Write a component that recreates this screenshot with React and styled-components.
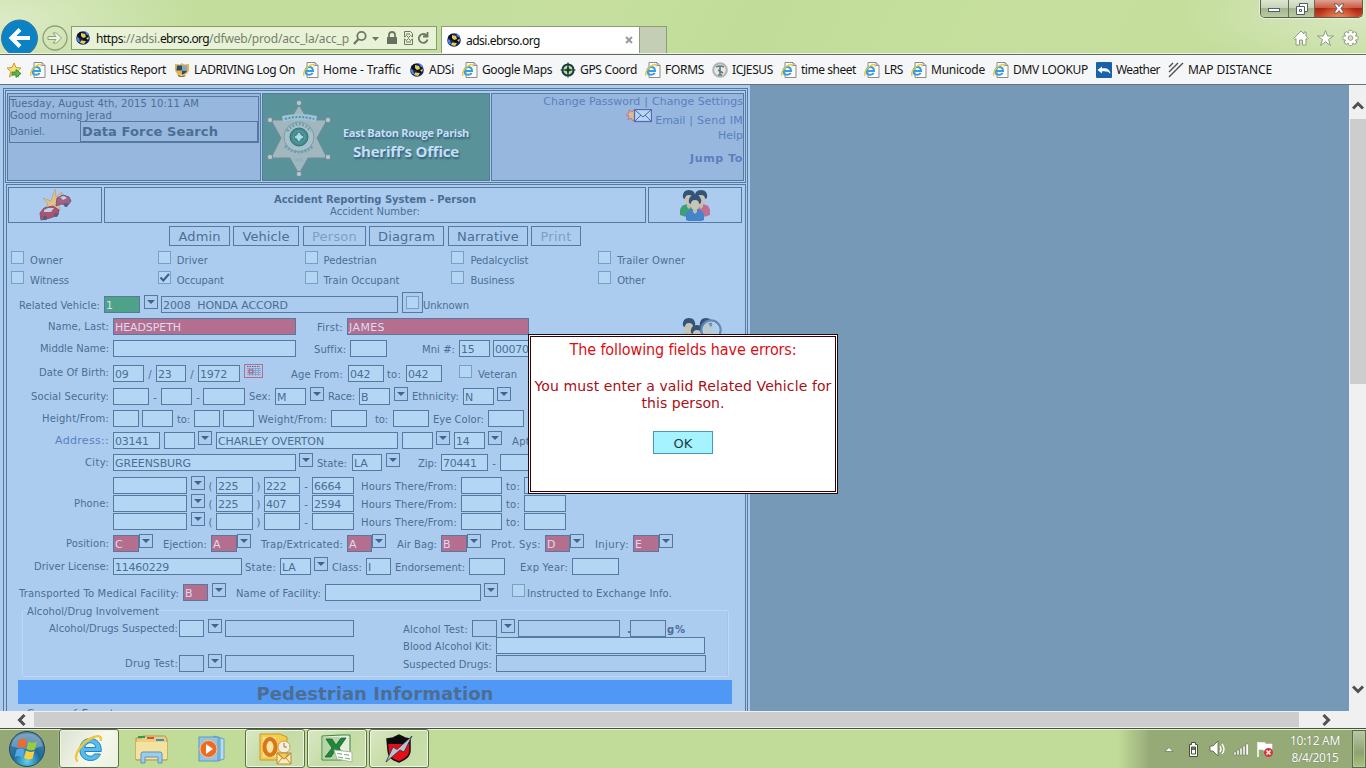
import React, { useLayoutEffect, useRef, useState } from "react";
import styled, { createGlobalStyle, css } from "styled-components";

const verdana = `"DejaVu Sans", Verdana, sans-serif`;
const segoe = `"Noto Sans", "Open Sans", "Segoe UI", sans-serif`;
const c = {
  page: "#abccef", line: "#55799f", text: "#4c6e93", field: "#b3d6f5",
  link: "#5b80bd", cell: "#97b7df", dim: "#7d9fc4",
};

const Global = createGlobalStyle`
  * { box-sizing: border-box; }
  html, body { margin: 0; height: 768px; overflow: hidden; }
  body { font: 10px/12px ${verdana}; color: ${c.text}; }
  svg { display: block; flex: none; }
`;

/* Text that spreads its letters to fill a known width */
const Run = styled.span`
  display: inline-block;
  white-space: pre;
  flex: none;
`;
function Fit({ w, children, className }) {
  const ref = useRef(null);
  const [gap, setGap] = useState(0);
  useLayoutEffect(() => {
    const natural = ref.current.getBoundingClientRect().width;
    setGap((w - natural) / ref.current.textContent.length);
  }, [w]);
  return <Run ref={ref} className={className} style={{ letterSpacing: gap }}>{children}</Run>;
}

/* ---------- browser chrome ---------- */
const Screen = styled.div`
  width: 1366px; height: 768px; position: relative; overflow: hidden;
  display: flex; flex-direction: column; background: #7799b8;
`;
const TitleBar = styled.header`
  height: 55px; flex: none; display: flex; align-items: flex-start;
  border-bottom: 1px solid #656b60; box-shadow: inset 0 -1px #eef3e4;
  background:
    radial-gradient(ellipse 200px 70px at 0 20px, #dcebc6, transparent),
    radial-gradient(ellipse 190px 60px at 1366px 15px, #d9e8c2, transparent),
    linear-gradient(115deg, #c2dd9c 30%, #c6df9f 42%, #c1dc98 55%, #c6df9e 75%, #c2dc99);
  font: 12px/16px ${segoe}; color: #111;
`;
const BackSlot = styled.div`width: 40px; height: 53px; padding: 19px 0 0 1px; overflow: hidden;`;
const ForwardSlot = styled.div`width: 31px; padding: 25px 0 0 2px;`;
const AddressBar = styled.div`
  width: 366px; height: 24px; margin-top: 26px; padding: 0 5px 0 3px; display: flex; align-items: center;
  background: #e7f2d6; border: 1px solid #8a9b72;
`;
const Url = styled.div`display: flex; margin-left: 5px; color: #77806c; width: 259px; padding-top: 1px; b { font-weight: 400; color: #111; }`;
const Tab = styled.div`
  margin: 26px 0 0 4px; width: 199px; height: 27px; padding: 0 6px 0 4px; display: flex; align-items: center;
  background: #fff; border: 1px solid #8d9c7a; border-bottom: 0;
`;
const TabTitle = styled.div`flex: 1; padding: 2px 0 0 4px;`;
const NewTab = styled.div`width: 27px; height: 27px; margin-top: 26px; background: #c4ceb5; border: 1px solid #8d9c7a; border-left: 0; border-bottom: 0;`;
const TitleEnd = styled.div`margin-left: auto; width: 108px; display: flex; flex-direction: column;`;
const WindowButtons = styled.div`
  display: flex; width: 103px; height: 18px; margin-left: 2px; overflow: hidden;
  border: 1px solid #555f4a; border-top: 0; border-radius: 0 0 5px 5px; box-shadow: 0 0 0 1px #e6efd9;
`;
const WindowButton = styled.div`
  width: ${p => p.$w}px; display: flex; justify-content: center; align-items: center;
  border-right: ${p => p.$close ? 0 : 1}px solid #626d55;
  padding-top: ${p => p.$drop || 0}px;
  background: ${p => p.$close
    ? "radial-gradient(ellipse at 50% 110%, #ef8d5e, transparent 60%), linear-gradient(#dfa293, #cc5c42 45%, #ac2410 50%, #cc4629)"
    : "linear-gradient(#dde6d1, #c8d3b9 45%, #a6b48f 50%, #bbcba0)"};
`;
const Tools = styled.div`display: flex; gap: 8px; padding: 11px 0 0 35px;`;

const Favorites = styled.nav`
  height: 30px; flex: none; display: flex; align-items: center; gap: 8px; padding-left: 6px;
  background: #f5f6f7; border-bottom: 1px solid #68707c; font: 12px/16px ${segoe}; color: #161616;
`;
const Favorite = styled.div`display: flex; align-items: center; gap: 4px;`;

const Ie = () => (
  <svg width="16" height="16" viewBox="0 0 16 16">
    <path d="M4 .5h8l3 3v12H4z M12 .5v3h3" fill="#fcfcfc" stroke="#8b8b8b" />
    <path d="M2.600 9h7.400c0-2.600-1.400-4-3.600-4C4.100 5 2.400 6.700 2.400 8.900c0 2.400 1.600 3.900 4 3.900 1.600 0 2.700-.7 3.300-1.900" fill="none" stroke="#3a9edb" strokeWidth="2" />
    <path d="M1.200 13.800C-.6 11.500 2.500 5 8 2.900c2-.7 3.600-.3 3 1.700" fill="none" stroke="#ecc937" strokeWidth="1.400" />
  </svg>
);
const Globe = () => (
  <svg width="16" height="16" viewBox="0 0 16 16">
    <circle cx="8" cy="8" r="6.800" fill="#16246a" />
    <path d="M2 5l3-3 3 1 2 2 3 1-1 5-3 2-1-4-3-1z" fill="#0d1010" />
    <path d="M6 3l4 1 1 3-3 1-2-2zM6 10.500l5 .5-2 3-4-1zM11 8l3-1-1 3z" fill="#e6cf55" />
    <path d="M1 7l3 1 1 4-2 0zM10 1l3 2 1 3-3-2z" fill="#4f8bd0" />
  </svg>
);
const Shield = () => (
  <svg width="16" height="16" viewBox="0 0 16 16">
    <path d="M1 2l5 .5L8 1l2 1.500 5-.5v5c0 4-3 5.500-7 6.500-4-1-7-2.500-7-6.500z" fill="#e4b24c" />
    <path d="M3 3.500h5v5H2.500zM8 8.500h5c-.5 2-2.500 3.500-5 4z" fill="#24506e" />
    <path d="M8 3.500h5v5H8z" fill="#85a8bd" /><path d="M3 12l4 2 5-1-2 2H5z" fill="#9b6a21" />
  </svg>
);
const Crosshair = () => (
  <svg width="16" height="16" viewBox="0 0 16 16" fill="none" stroke="#143f43">
    <circle cx="8" cy="8" r="5.600" strokeWidth="2" fill="#cfd992" /><path d="M8 .5v15M.5 8h15" strokeWidth="1.200" /><path d="M8 4l1.300 2.700L12 8 9.300 9.300 8 12 6.700 9.300 4 8l2.700-1.300z" fill="#143f43" stroke="none" />
  </svg>
);
const Seal = () => (
  <svg width="16" height="16" viewBox="0 0 16 16" fill="none">
    <circle cx="8" cy="8" r="6.800" stroke="#b0b4b4" strokeWidth="2" fill="#e7eaea" /><path d="M4 5q4-2 8 0M8 4v9M6 8l5 3M6 13h4" stroke="#647d7f" strokeWidth="1.700" />
  </svg>
);
const WeatherIcon = () => (
  <svg width="16" height="16" viewBox="0 0 16 16"><rect width="16" height="16" rx="1" fill="#1762a8" /><path d="M1.500 8L6 4.500v2c5-.8 8 1 8.500 5.500C13 9.500 10 9 6 9.300v2.200z" fill="#fff" /></svg>
);
const Stripes = () => (
  <svg width="16" height="16" viewBox="0 0 16 16" stroke="#4c4f50" strokeWidth="1.400"><path d="M1 5l4-4M1 10l9-9M1 15L15 1" /></svg>
);
const FavStar = () => (
  <svg width="16" height="16" viewBox="0 0 16 16"><path d="M8 1l2 4.500 5 .5-3.700 3.400L12.500 15 8 12l-4.500 3 1.200-5.500L1 6l5-.5z" fill="#fadf78" stroke="#cf9832" /><path d="M6 10h4V7.500l5 4-5 4V13H6z" fill="#55b948" stroke="#2f7d2d" strokeWidth=".8" /></svg>
);

const favorites = [
  ["LHSC Statistics Report", 116, Ie], ["LADRIVING Log On", 101, Shield], ["Home - Traffic", 78, Ie],
  ["ADSi", 25, Globe], ["Google Maps", 70, Ie], ["GPS Coord", 57, Crosshair], ["FORMS", 39, Ie],
  ["ICJESUS", 41, Seal], ["time sheet", 55, Ie], ["LRS", 19, Ie], ["Municode", 54, Ie],
  ["DMV LOOKUP", 75, Ie], ["Weather", 44, WeatherIcon], ["MAP DISTANCE", 84, Stripes],
];

/* ---------- web page ---------- */
const Viewport = styled.main`height: 626px; flex: none; display: flex; overflow: hidden;`;
const Page = styled.div`width: 750px; flex: none; background: ${c.page}; padding: 3px 0 0 3px; overflow: hidden;`;
const Frame = styled.div`width: 745px; height: 640px; border: 1px solid ${c.line}; border-bottom: 0; padding: 1px;`;
const HeaderTable = styled.div`height: 93px; border: 1px solid ${c.line}; padding: 2px 1px 1px; display: flex; gap: 1px;`;
const HeaderCell = styled.div`
  width: ${p => p.$w}px; height: 88px; border: 1px solid ${c.line}; background: ${p => p.$bg || c.cell};
  padding: ${p => p.$pad || 0}; display: ${p => p.$row ? "flex" : "block"}; flex: none;
`;
const Greeting = styled.div`border: 1px solid ${c.line}; height: 47px; width: 250px; line-height: 12px; padding-top: 1px;`;
const GreetingEnd = styled.div`display: flex; height: 21px; align-items: center; line-height: 22px; margin-top: -1px;`;
const SearchCell = styled.div`width: 178px; height: 21px; margin-left: auto; border: 1px solid ${c.line}; padding-left: 1px; font: bold 13px/20px ${verdana};`;
const AgencyName = styled.div`
  display: flex; flex-direction: column; align-items: center; padding: 27px 0 0 11px;
  color: #c4def6; font: bold 11px/14px "Open Sans", sans-serif; text-shadow: 1px 2px 2px #305c76;
`;
const AgencyLarge = styled.div`font-size: 15px; line-height: 24px; margin-top: -1px;`;
const Links = styled.div`color: ${c.link}; font-size: 11px; text-align: right; line-height: 14px;`;
const LinkLine = styled.div`display: flex; justify-content: flex-end; align-items: center; gap: ${p => p.$gap || 0}px; height: ${p => p.$h}px; font-weight: ${p => p.$bold ? 700 : 400};`;
const MailLine = styled.div`display: flex; justify-content: flex-end; align-items: flex-start; gap: 3px; height: 19px;`;
const MailText = styled.div`display: flex; gap: 4px; padding-top: 5px;`;

const Body = styled.div`margin: 1px 0 0 1px; border: 1px solid ${c.line}; border-bottom: 0; height: 560px; padding-top: 2px;`;
const TitleRow = styled.div`display: flex; gap: 2px; padding-left: 1px;`;
const TitleCell = styled.div`
  width: ${p => p.$w}px; height: 36px; border: 1px solid ${c.line}; display: flex; flex-direction: column;
  align-items: center; justify-content: center; line-height: 12px; padding-top: ${p => p.$drop || 0}px;
`;
const Strong = styled.div`font-weight: 700;`;
const Nav = styled.div`display: flex; height: 20px; margin: 3px 0 5px 162px;`;
const NavButton = styled.div`
  width: ${p => p.$w}px; margin-right: ${p => p.$mr}px; border: 1px solid ${c.line}; text-align: center;
  font-size: 13px; line-height: 19px; color: ${p => p.$off ? c.dim : c.text};
`;
const CheckRow = styled.div`display: flex; height: 20px; padding-left: 4px;`;
const CheckItem = styled.div`width: 147.2px; display: flex; line-height: 19px; gap: 6px;`;
const box = css`
  height: 13px; border: 1px solid #799fc5; background: ${c.field};
`;
const Check = styled.div`${box} width: 13px; flex: none; margin-left: ${p => p.$ml || 0}px;`;
const BoxedCheck = styled.div`width: 21px; height: 21px; margin: -4px 0 0 4px; padding: 3px; border: 1px solid ${c.line}; flex: none;`;

const Row = styled.div`display: flex; height: 17px; margin-top: ${p => p.$mt}px;`;
const LabelBox = styled.div`
  width: ${p => p.$w}px; margin-left: ${p => p.$ml || 0}px; flex: none; text-align: ${p => p.$mid ? "center" : "right"}; white-space: pre;
  line-height: ${p => p.$lh || 19}px; color: ${p => p.$link ? c.link : c.text};
  font-size: ${p => p.$link ? 11 : 10}px; font-weight: ${p => p.$bold ? 700 : 400};
`;
const tones = { red: "#b56f8e", green: "#4ea288", flat: "transparent" };
const Field = styled.div`
  width: ${p => p.$w}px; height: 17px; margin-left: ${p => p.$ml ?? 4}px; flex: none; overflow: hidden; white-space: pre;
  border: 1px solid ${c.line}; background: ${p => tones[p.$tone] || c.field}; padding-left: 1px;
  color: ${p => p.$tone === "red" || p.$tone === "green" ? "#d6dcf4" : c.text};
  font-size: 11px; line-height: 17px; letter-spacing: -.25px;
`;
const DropBox = styled.div`
  width: 14px; height: 14px; margin: -1px 0 0 ${p => p.$ml ?? 4}px; flex: none; border: 1px solid ${c.line};
  display: flex; align-items: center; justify-content: center;
`;
const Drop = ({ ml }) => <DropBox $ml={ml}><svg width="8" height="4" viewBox="0 0 8 4"><path d="M0 0h8L4 4z" fill="#3f658c" /></svg></DropBox>;
const L = ({ w, ml, t, ...p }) => <LabelBox $w={w} $ml={ml} {...p}><Fit w={w}>{t}</Fit></LabelBox>;
/* First label of a row, right-aligned against the first field column */
const Lead = ({ t, n, ...p }) => <LabelBox $w={102} $lh={17} {...p}>{t && <Fit w={n}>{t}</Fit>}</LabelBox>;
const Mark = ({ t, w = 6, ml = 3 }) => <LabelBox $w={w} $ml={ml} $mid>{t}</LabelBox>;
const F = ({ w, ml, v, tone, n }) => <Field $w={w} $ml={ml} $tone={tone}>{n ? <Fit w={n}>{v}</Fit> : v}</Field>;
const DateIcon = styled.div`margin: -1px 0 0 4px; flex: none;`;

const Group = styled.section`width: 707px; height: 67px; margin: 9px 0 0 15px; border: 1px solid #bbd8f4; border-radius: 2px; box-shadow: inset -1px 0 #a3c5e9;`;
const GroupTitle = styled.div`margin: -6px 0 0 4px; height: 13px; line-height: 13px; width: 133px; background: ${c.page};`;
const SectionBar = styled.div`width: 714px; height: 24px; margin: 3px 0 0 11px; background: #5098f5; text-align: center; font: bold 18px/27px ${verdana};`;
const Next = styled.div`padding: 3px 0 0 20px; line-height: 14px;`;

const ScrollColumn = styled.div`margin-left: auto; width: 17px; background: #f0f0f0; display: flex; flex-direction: column; align-items: center;`;
const ThumbV = styled.div`width: 16px; height: 265px; margin-top: 7px; background: #cdcdcd;`;
const ScrollRow = styled.div`height: 17px; flex: none; display: flex; align-items: center; background: #f0f0f0; padding-left: 16px;`;
const ThumbH = styled.div`width: 1265px; height: 15px; margin: 0 21px 0 6px; background: #cdcdcd;`;
const Arrow = ({ turn = 0 }) => (
  <svg width="12" height="12" viewBox="0 0 12 12">
    <path transform={`rotate(${turn} 6 6)`} d="M1 8.500l5-5 5 5" fill="none" stroke="#505050" strokeWidth="3" />
  </svg>
);
const UpSlot = styled.div`padding-top: 15px;`;
const DownSlot = styled.div`margin-top: auto; padding-bottom: 16px;`;

/* ---------- dialog ---------- */
const Dialog = styled.div`
  position: absolute; left: 528px; top: 334px; width: 310px; height: 160px; background: #fff; border: 3px double #2b0508;
  display: flex; flex-direction: column; align-items: center; color: #a80f16; font: 14px/17px ${verdana};
`;
const DialogTitle = styled.div`color: #d80f16; font: 16px/20px "DejaVu Sans Condensed", "DejaVu Sans", sans-serif; margin: 3px 0 18px;`;
const Ok = styled.div`margin-top: 19px; width: 60px; height: 23px; border: 1px solid #4b97bb; background: #a5f3fe; color: #203a46; text-align: center; line-height: 23px; font-size: 13px;`;

/* ---------- taskbar ---------- */
const Taskbar = styled.footer`
  height: 40px; flex: none; display: flex; border-top: 1px solid #46533a; box-shadow: inset 0 1px #e3efd2;
  background: linear-gradient(90deg, #95a977 0 58px, #c1db98 60px, #c1db98 1118px, #96aa77 1150px);
`;
const Start = styled.div`width: 59px; padding: 1px 0 0 8px;`;
const Task = styled.div`
  width: 60px; height: 39px; margin-right: ${p => p.$mr ?? 2}px; display: flex; align-items: center; justify-content: center;
  ${p => p.$open && css`
    border: 1px solid #5e6e4c; border-radius: 3px; box-shadow: inset 0 0 0 1px #eef6e3;
    background: ${p.$active ? "linear-gradient(120deg, #dbe2d0, #f5f8ef 60%, #e9f2dc)" : "linear-gradient(130deg, #d9e8c5, #c5dba4 50%, #cbe0ad)"};
  `}
`;
const Tray = styled.div`margin-left: auto; display: flex; align-items: center; color: #fff;`;
const Clock = styled.div`
  width: 72px; margin-left: 4px; display: flex; flex-direction: column; align-items: center;
  font: 12px/17px ${segoe}; padding-right: 2px; text-shadow: 0 0 1px #55624a;
`;
const ShowDesktop = styled.div`width: 14px; height: 38px; margin-top: 1px; border: 1px solid #59694a; box-shadow: inset 0 0 0 1px #b8c7a2; background: linear-gradient(#b9c7a6, #8ea26f 60%, #a4c27c);`;

const Orb = () => (
  <svg width="38" height="38" viewBox="0 0 38 38">
    <defs><radialGradient id="orb" cx=".5" cy=".85" r=".85"><stop offset="0" stopColor="#5fd3ee" /><stop offset=".45" stopColor="#1d6a9e" /><stop offset="1" stopColor="#5b8aa8" /></radialGradient></defs>
    <circle cx="19" cy="19" r="17.500" fill="url(#orb)" stroke="#24485e" />
    <path d="M3.500 16C5 7 11 3.500 19 3.500S33 7 34.500 16C26 20 12 20 3.500 16z" fill="#fff" opacity=".25" />
    <path d="M11 10q4.500-2.500 8 .5l-2 8q-4-2.500-8-.5z" fill="#ee6a31" /><path d="M20.500 11.500q4 2.500 8.500 0l-2 8q-4.500 2-8.500-.5z" fill="#9ccb3b" />
    <path d="M8.600 19.500q4-2 8 .5l-2 7.500q-4-2.500-8-.5z" fill="#54a9e5" /><path d="M18 20.500q4 2.500 8.500.5l-2 7.500q-4.500 2-8.500-.5z" fill="#fbcf3c" />
  </svg>
);
const BigIe = () => (
  <svg width="30" height="30" viewBox="0 0 30 30" fill="none">
    <path d="M10.700 17.500h16.500C27.800 9.500 23 4.500 16.500 4.500 10 4.500 5.800 9.300 5.800 15.500 5.800 22 10 26.500 16.500 26.500c5 0 8.500-2.500 9.800-6.500h-6c-.8 1.500-2 2.200-3.700 2.200-3.200 0-5.400-1.900-5.900-4.700zM10.700 13.500c.7-3 2.900-4.700 5.600-4.700 3 0 5 1.800 5.400 4.700z" fill="#56bcee" fillRule="evenodd" stroke="#1f83bd" />
    <path d="M3.500 27.500C-1 23 6 8 20 3c5-1.800 8-1 6.500 4" stroke="#f4c534" strokeWidth="2.400" />
  </svg>
);
const Folder = () => (
  <svg width="33" height="30" viewBox="0 0 33 30"><path d="M1 4h6l1-2h22l2 3v21H1z" fill="#e9cf80" stroke="#b99443" /><path d="M3 2h7v2H3z" fill="#2f9b54" /><path d="M12 3h7v2h-7z" fill="#d84f3d" /><path d="M21 5h8v2h-8z" fill="#3d8dd0" /><path d="M1 8h31v17H1z" fill="#f6e2a0" /><path d="M6 29V20q0-2 2-2h17q2 0 2 2v9h-4v-6H10v6z" fill="#9bcdea" stroke="#5b95c0" /></svg>
);
const Player = () => (
  <svg width="30" height="28" viewBox="0 0 30 28"><path d="M20 2l6 2v20l-6 2z" fill="#b9dcee" stroke="#6ba3c4" /><path d="M16 1l6 2v22l-6 1z" fill="#8fc2df" stroke="#5e9bc0" /><rect x="1" y="2" width="19" height="24" fill="#93c5e3" stroke="#5c9cc4" /><circle cx="10.500" cy="14" r="8.500" fill="#ec6d22" stroke="#f7c49e" /><path d="M8 9l7 5-7 5z" fill="#fff" /></svg>
);
const Outlook = () => (
  <svg width="33" height="32" viewBox="0 0 33 32"><path d="M1 1h20l7 3v23H1z" fill="#f5cc4c" stroke="#cb962a" /><path d="M4 4h13v20H4z" fill="#fbe5a3" /><ellipse cx="11" cy="14" rx="5.500" ry="8" fill="none" stroke="#d9761c" strokeWidth="4" /><circle cx="25" cy="14" r="6" fill="#f3efe5" stroke="#caa556" /><path d="M25 10v4h3" stroke="#b1762f" fill="none" /><path d="M18 20h14v11H18zl7 6 7-6" fill="#fbedba" stroke="#bd8938" /><path d="M18 20l7 6 7-6M18 31l5-6M32 31l-5-6" fill="none" stroke="#bd8938" /></svg>
);
const Excel = () => (
  <svg width="32" height="30" viewBox="0 0 32 30"><path d="M1 2l19-1h9v25H1z" fill="#e3eedb" stroke="#3b8645" /><path d="M2 3h17v22H2z" fill="#b7d6a8" /><path d="M5 5h6l4 6 5-7h5l-7 10 7 9h-7l-4-6-4 6H4l7-9z" fill="#20863c" stroke="#125b27" strokeWidth=".7" /><path d="M13 16l18 2v10l-15-3z" fill="#fff" stroke="#a8b9a0" /><path d="M16 19.500l5 .7M23 20.500l5 .7M17 23l5 .8M24 24l5 .8" stroke="#7fb37e" strokeWidth="1.200" /></svg>
);
const Bolt = () => (
  <svg width="30" height="30" viewBox="0 0 30 30"><path d="M3 5l6-1 6-3 6 3 5 1v11c0 6-4 9-11 12C7 25 4 22 4 16z" fill="#e80d15" stroke="#101018" strokeWidth="1.500" /><path d="M3 5l6-1 6-3 6 3 5 1-1 5H4z" fill="#0b0b0d" /><path d="M28 2L20 18l-4-2L2 28l7-15 4 2.500z" fill="#bfc0c6" stroke="#2c2c50" strokeWidth=".8" /></svg>
);

const Star6 = () => (
  <svg width="65" height="80" viewBox="0 0 65 80">
    <g fill="#a1b7bd" stroke="#6d8d9b">
      <path d="M32 6l9 15 19 0-10 18 10 20-19 0-9 16-9-16-19 0 10-20L4 21l19 0z" />
      {[[32, 4], [61, 21], [61, 58], [32, 75], [3, 58], [3, 21]].map(([x, y]) => <circle key={`${x}-${y}`} cx={x} cy={y} r="2.700" fill="#b6c6cb" />)}
    </g>
    <path d="M15 17q17-4 35 0l-1 6q-17-4-33 0z" fill="#9cc3d6" /><path d="M18 20q14-4 29 0" fill="none" stroke="#5e8fa3" strokeWidth="2" strokeDasharray="2 1.500" />
    <circle cx="32" cy="38" r="15" fill="#a7c1ca" stroke="#7b9da6" /><path d="M20 32q12-14 24 0M18 47q14 12 28 0" fill="none" stroke="#6f9eac" strokeWidth="3" strokeDasharray="2 1.500" />
    <circle cx="32" cy="38" r="9" fill="#438b8d" stroke="#336f79" /><circle cx="32" cy="38" r="6" fill="none" stroke="#5ba0a6" /><path d="M32 34l1.500 2.500L36 38l-2.500 1.500L32 42l-1.500-2.500L28 38l2.500-1.500z" fill="#b3dbe8" stroke="#b3dbe8" />
    <path d="M28 61h8" stroke="#8bb3c5" strokeWidth="3" />
  </svg>
);
const Crash = () => (
  <svg width="34" height="32" viewBox="0 0 34 32">
    <path d="M17 0l1 8 6-5-2 8 6 1-7 4 1 5-7-2-9 2 4-6-5-6 8 3z" fill="#dfc284" stroke="#b79b86" strokeWidth=".7" />
    <path d="M19 9l6-3 6 2 2 4-3 4-7-1-5 2z" fill="#a65f84" stroke="#73577d" /><path d="M22 8l4-1 3 2-4 2z" fill="#b6d4ef" />
    <path d="M2 24l4-5 9-2 6 4-1 5-8 3-9 2z" fill="#ae526f" stroke="#79577c" /><path d="M6 21l4-2 6 0-3 4H6z" fill="#b6d4ef" />
    <circle cx="7" cy="29" r="2.200" fill="#4f5f83" /><circle cx="18" cy="26" r="2" fill="#4f5f83" /><circle cx="28" cy="16" r="2" fill="#4f5f83" />
  </svg>
);
const Head = ({ x, y, body }) => (
  <g transform={`translate(${x} ${y})`}>
    <path d="M-9 20v-5q1-6 9-6t9 6v5q-9 4-18 0z" fill={body} /><path d="M-2 6h4v6l-2 2-2-2z" fill="#c2bda8" />
    <ellipse cx="0" cy="4" rx="4.800" ry="6" fill="#c6c4b5" /><path d="M-6 3q-1-8 6-8t6 8l-2 1q0-4-4-4t-4 4z" fill="#345376" />
  </g>
);
const People = () => (
  <svg width="32" height="32" viewBox="0 0 32 32"><Head x="10" y="6" body="#3d9f78" /><Head x="22" y="6" body="#c06e91" /><Head x="16" y="11" body="#4484ca" /></svg>
);
const Lookup = styled.div`margin: -2px 0 0 152px; height: 17px; overflow: visible;`;
const PeopleSearch = () => (
  <svg width="44" height="32" viewBox="0 0 44 32"><Head x="8" y="7" body="#c2bda8" /><Head x="25" y="7" body="#c2bda8" /><Head x="16" y="14" body="#5c7e97" /><circle cx="30" cy="14" r="9.500" fill="#b7cfe4" fillOpacity=".5" stroke="#6488b5" strokeWidth="2.500" /><circle cx="30" cy="14" r="8" fill="none" stroke="#b9d6f2" /></svg>
);
const Mail = () => (
  <svg width="26" height="14" viewBox="0 0 26 14"><path d="M8 1L6 3 3 1v3L0 6l3 1-1 4 3-2 2 3 2-3V3z" fill="#d5be94" stroke="#c77488" /><rect x="8.500" y=".5" width="17" height="12" fill="#b5d7f7" stroke="#5b69b5" strokeWidth="1.300" /><path d="M9 1l8 7 8-7M9 12l6-6M25 12l-6-6" fill="none" stroke="#52689a" /></svg>
);
const Calendar = () => (
  <svg width="19" height="14" viewBox="0 0 19 14"><rect x=".5" y=".5" width="18" height="13" fill="#b4c9e8" stroke="#ad6f92" /><path d="M3 2.500h13" stroke="#45658d" strokeDasharray="1.500 1" /><path d="M3 4.500h14M3 6.500h14M3 8.500h14M3 10.500h14M5.500 4v8M8.500 4v8M11.500 4v8M14.500 4v8" stroke="#7597c4" strokeWidth=".7" /><rect x="5" y="6" width="4" height="3" fill="none" stroke="#bd5474" /></svg>
);

const kinds = [
  ["Owner", "Driver", "Pedestrian", "Pedalcyclist", "Trailer Owner"],
  ["Witness", "Occupant", "Train Occupant", "Business", "Other"],
];
const kindWidths = [[33, 31, 53, 58, 68], [39, 47, 76, 44, 28]];
const phones = [["225", "222", "6664"], ["225", "407", "2594"], ["", "", ""]];
const codes = [
  ["Ejection:", 10, 44, 26, "A"], ["Trap/Extricated:", 10, 82, 25, "A"], ["Air Bag:", 11, 40, 26, "B"],
  ["Prot. Sys:", 10, 50, 25, "D"], ["Injury:", 11, 34, 26, "E"],
];

function Browser() {
  return (
    <>
      <TitleBar>
        <BackSlot><svg width="38" height="38" viewBox="0 0 38 38"><circle cx="18.500" cy="19" r="18" fill="#0b82c5" stroke="#3c7896" /><path d="M29 19H12M19 10.500L10.500 19l8.500 8.500" fill="none" stroke="#fff" strokeWidth="4" /></svg></BackSlot>
        <ForwardSlot><svg width="26" height="26" viewBox="0 0 26 26" fill="none" stroke="#8fa17c"><circle cx="13" cy="13" r="12" strokeWidth="1.300" /><path d="M6 11.500h8L11 8h3.500l5 5-5 5H11l3-3.500H6z" fill="#edf5e2" /></svg></ForwardSlot>
        <AddressBar>
          <Globe />
          <Url><b><Fit w={27}>https</Fit></b><Fit w={37}>://adsi.</Fit><b><Fit w={49}>ebrso.org</Fit></b><Fit w={140}>/dfweb/prod/acc_la/acc_p</Fit></Url>
          <svg width="78" height="16" viewBox="0 0 78 16" fill="none" stroke="#6c7861" strokeWidth="1.800">
            <circle cx="8.500" cy="6" r="4.200" /><path d="M5.500 9L1 14" strokeWidth="2.200" /><path d="M19 7h7l-3.500 4z" fill="#6c7861" stroke="none" />
            <path d="M34 7h10v7H34z" fill="#66705d" stroke="none" /><path d="M36 8V5q0-3 3-3t3 3v3" />
            <path d="M51.500 7V1.500h6l2 2V7l-2-1.500-2 2-2-2zM51.500 9l2 1.500 2-2 2 2 2-1.500v5.500h-8zM53 4h4M53 12h5" strokeWidth="1" />
            <path d="M74.500 2v4.500H70M74.500 9.500a4.400 4.400 0 1 1-1.500-4.500l1.500 1.500" />
          </svg>
        </AddressBar>
        <Tab><Globe /><TabTitle><Fit w={74}>adsi.ebrso.org</Fit></TabTitle><svg width="8" height="8" viewBox="0 0 8 8"><path d="M1 1l6 6M7 1L1 7" stroke="#9a9a9a" strokeWidth="2" /></svg></Tab>
        <NewTab />
        <TitleEnd>
          <WindowButtons>
            <WindowButton $w={28} $drop={3}><svg width="12" height="4" viewBox="0 0 12 4"><rect x=".5" y=".5" width="11" height="3" fill="#fff" stroke="#555e6b" /></svg></WindowButton>
            <WindowButton $w={27}><svg width="12" height="12" viewBox="0 0 12 12" fill="#fff" stroke="#525b66"><path d="M3.500.5h8v8h-8z" /><path d="M.5 3.500h8v8h-8z" /><path d="M3.500 6.500h2v2h-2z" /></svg></WindowButton>
            <WindowButton $w={47} $close><svg width="12" height="11" viewBox="0 0 12 11"><path d="M1 1h3l2 2.500L8 1h3L8 5.500l3 4.500H8L6 7.500 4 10H1l3-4.500z" fill="#fff" stroke="#5e4a4a" strokeWidth=".8" /></svg></WindowButton>
          </WindowButtons>
          <Tools>
            <svg width="16" height="18" viewBox="0 0 16 18"><path d="M8 2L.7 9.500l1 1L3 9.500V16h3.500v-5h3v5H13V9.500l1.300 1 1-1L13 7V3h-2v2z" fill="#fff" stroke="#8e9e7d" /></svg>
            <svg width="17" height="18" viewBox="0 0 17 18"><path d="M8.500 1.500l2 5.500h6l-5 3.500 2 6-5-3.700-5 3.700 2-6-5-3.500h6z" fill="#fff" stroke="#8e9e7d" /></svg>
            <svg width="17" height="18" viewBox="0 0 18 18">
              {[0, 45, 90, 135].map(a => <rect key={a} x="7" y="1" width="4" height="16" rx="1" fill="#fff" stroke="#8e9e7d" transform={`rotate(${a} 9 9)`} />)}
              <circle cx="9" cy="9" r="5.500" fill="#fff" /><circle cx="9" cy="9" r="2.500" fill="#d5e4bf" stroke="#8e9e7d" />
            </svg>
          </Tools>
        </TitleEnd>
      </TitleBar>
      <Favorites>
        <FavStar />
        {favorites.map(([t, w, Icon]) => <Favorite key={t}><Icon /><Fit w={w}>{t}</Fit></Favorite>)}
      </Favorites>
    </>
  );
}

function PageHeader() {
  return (
    <HeaderTable>
      <HeaderCell $w={254} $pad="2px 1px">
        <Greeting>
          <div><Fit w={189}>Tuesday, August 4th, 2015 10:11 AM</Fit></div>
          <div><Fit w={102}>Good morning Jerad</Fit></div>
          <GreetingEnd><Fit w={35}>Daniel.</Fit><SearchCell><Fit w={136}>Data Force Search</Fit></SearchCell></GreetingEnd>
        </Greeting>
      </HeaderCell>
      <HeaderCell $w={228} $bg="#5a9299" $row $pad="5px 0 0 4px">
        <Star6 />
        <AgencyName><Fit w={126}>East Baton Rouge Parish</Fit><AgencyLarge><Fit w={106}>Sheriff’s Office</Fit></AgencyLarge></AgencyName>
      </HeaderCell>
      <HeaderCell $w={253}>
        <Links>
          <LinkLine $h={15} $gap={4}><Fit w={97}>Change Password</Fit>|<Fit w={91}>Change Settings</Fit></LinkLine>
          <MailLine><Mail /><MailText><Fit w={30}>Email</Fit>|<Fit w={46}>Send IM</Fit></MailText></MailLine>
          <LinkLine $h={16}><Fit w={25}>Help</Fit></LinkLine>
          <LinkLine $h={29} $bold><Fit w={53}>Jump To</Fit></LinkLine>
        </Links>
      </HeaderCell>
    </HeaderTable>
  );
}

function PersonForm() {
  return (
    <Body>
      <TitleRow>
        <TitleCell $w={94}><Crash /></TitleCell>
        <TitleCell $w={542} $drop={2}><Strong><Fit w={202}>Accident Reporting System - Person</Fit></Strong><Fit w={90}>Accident Number:</Fit></TitleCell>
        <TitleCell $w={94}><People /></TitleCell>
      </TitleRow>
      <Nav>
        <NavButton $w={61} $mr={3}><Fit w={42}>Admin</Fit></NavButton>
        <NavButton $w={66} $mr={4}><Fit w={47}>Vehicle</Fit></NavButton>
        <NavButton $w={63} $mr={3} $off><Fit w={45}>Person</Fit></NavButton>
        <NavButton $w={75} $mr={4}><Fit w={57}>Diagram</Fit></NavButton>
        <NavButton $w={80} $mr={3}><Fit w={62}>Narrative</Fit></NavButton>
        <NavButton $w={50} $mr={0} $off><Fit w={31}>Print</Fit></NavButton>
      </Nav>
      {kinds.map((row, r) => (
        <CheckRow key={r}>
          {row.map((t, i) => (
            <CheckItem key={t}>
              <Check>{t === "Occupant" && <svg width="11" height="11" viewBox="0 0 11 11"><path d="M1.500 5.500l2.800 3L10 2" fill="none" stroke="#3e5f84" strokeWidth="2" /></svg>}</Check>
              <Fit w={kindWidths[r][i]}>{t}</Fit>
            </CheckItem>
          ))}
        </CheckRow>
      ))}
      <Row $mt={5}>
        <L ml={12} w={81} t="Related Vehicle:" /><F w={36} v="1" tone="green" /><Drop /><F ml={3} w={237} tone="flat" v="2008  HONDA ACCORD" n={125} />
        <BoxedCheck><Check /></BoxedCheck><L w={46} t="Unknown" />
      </Row>
      <Row $mt={5}>
        <Lead t="Name, Last:" n={61} /><F w={183} v="HEADSPETH" n={66} tone="red" /><L ml={21} w={26} t="First:" /><F w={182} v="JAMES" n={36} tone="red" />
        <Lookup><PeopleSearch /></Lookup>
      </Row>
      <Row $mt={5}>
        <Lead t="Middle Name:" n={69} /><F w={183} /><L ml={18} w={32} t="Suffix:" /><F w={37} /><L ml={35} w={33} t="Mni #:" /><F w={31} v="15" /><F ml={3} w={50} v="00070" />
      </Row>
      <Row $mt={8}>
        <Lead t="Date Of Birth:" n={70} $lh={15} /><F w={31} v="09" /><Mark t="/" /><F ml={3} w={30} v="23" /><Mark t="/" /><F ml={3} w={42} v="1972" />
        <DateIcon><Calendar /></DateIcon>
        <L ml={28} w={52} t="Age From:" /><F ml={5} w={36} v="042" /><L ml={3} w={14} t="to:" /><F ml={5} w={36} v="042" /><Check $ml={17} /><L ml={6} w={39} t="Veteran" />
      </Row>
      <Row $mt={6}>
        <Lead t="Social Security:" n={78} /><F w={36} /><Mark t="-" /><F ml={3} w={31} /><Mark t="-" /><F ml={2} w={42} />
        <L ml={4} w={22} $lh={17} t="Sex:" /><F w={31} v="M" /><Drop /><L ml={4} w={27} $lh={17} t="Race:" /><F w={31} v="B" /><Drop /><L ml={4} w={47} $lh={17} t="Ethnicity:" /><F w={31} v="N" /><Drop ml={3} />
      </Row>
      <Row $mt={5}>
        <Lead t="Height/From:" n={67} /><F w={26} /><F ml={3} w={31} /><L ml={4} w={13} t="to:" /><F w={26} /><F ml={3} w={31} />
        <L ml={4} w={69} t="Weight/From:" /><F w={36} /><L ml={8} w={13} t="to:" /><F ml={5} w={36} /><L ml={4} w={51} t="Eye Color:" /><F w={36} />
      </Row>
      <Row $mt={5}>
        <Lead t="Address::" n={54} $link /><F w={47} v="03141" /><F w={31} /><Drop ml={3} /><F w={182} v="CHARLEY OVERTON" n={106} /><F w={31} /><Drop ml={3} /><F w={31} v="14" /><Drop ml={3} /><L ml={10} w={18} t="Apt" />
      </Row>
      <Row $mt={5}>
        <Lead t="City:" n={24} /><F w={183} v="GREENSBURG" n={76} /><Drop ml={3} /><L ml={4} w={30} t="State:" /><F ml={5} w={30} v="LA" /><Drop />
        <L ml={18} w={19} t="Zip:" /><F w={47} v="70441" /><Mark t="-" /><F ml={3} w={40} />
      </Row>
      {phones.map(([a, b, d], i) => (
        <Row key={i} $mt={i ? 1 : 6}>
          <Lead t={i === 1 ? "Phone:" : ""} n={35} /><F w={74} /><Drop /><Mark t="(" w={5} /><F ml={3} w={37} v={a} /><Mark t=")" w={5} /><F ml={3} w={36} v={b} /><Mark t="-" /><F ml={3} w={42} v={d} />
          <L ml={7} w={96} t="Hours There/From:" /><F w={41} /><L ml={4} w={14} t="to:" /><F w={42} />
        </Row>
      ))}
      <Row $mt={5}>
        <Lead t="Position:" n={43} /><F w={26} v="C" tone="red" /><Drop ml={0} />
        {codes.map(([t, ml, w, fw, v]) => <React.Fragment key={t}><L ml={ml} w={w} t={t} /><F w={fw} v={v} tone="red" /><Drop ml={0} /></React.Fragment>)}
      </Row>
      <Row $mt={6}>
        <Lead t="Driver License:" n={75} /><F w={129} v="11460229" /><L ml={3} w={31} t="State:" /><F w={31} v="LA" /><Drop ml={3} /><L ml={4} w={30} t="Class:" /><F w={25} v="I" />
        <L ml={4} w={70} t="Endorsement:" /><F w={36} /><L ml={15} w={48} t="Exp Year:" /><F w={47} />
      </Row>
      <Row $mt={9}>
        <L ml={12} w={160} t="Transported To Medical Facility:" /><F w={25} v="B" tone="red" /><Drop /><L ml={10} w={85} t="Name of Facility:" /><F w={156} /><Drop ml={3} />
        <Check $ml={14} /><L ml={2} w={145} t="Instructed to Exchange Info." />
      </Row>
      <Group>
        <GroupTitle><Fit w={132}>Alcohol/Drug Involvement</Fit></GroupTitle>
        <Row $mt={2}>
          <L ml={26} w={129} $lh={17} t="Alcohol/Drugs Suspected:" /><F ml={1} w={25} /><Drop /><F ml={3} w={129} tone="flat" />
          <L ml={49} w={65} t="Alcohol Test:" /><F w={25} tone="flat" /><Drop /><F ml={3} w={102} tone="flat" /><L ml={7} w={3} $bold t="." /><F ml={0} w={36} tone="flat" /><L ml={1} w={19} $bold t="g%" />
        </Row>
        <Row $mt={0}><L ml={380} w={89} t="Blood Alcohol Kit:" /><F w={209} /></Row>
        <Row $mt={1}>
          <L ml={102} w={53} $lh={17} t="Drug Test:" /><F ml={1} w={25} tone="flat" /><Drop /><F ml={3} w={129} tone="flat" />
          <L ml={49} w={89} t="Suspected Drugs:" /><F w={210} tone="flat" />
        </Row>
      </Group>
      <SectionBar><Fit w={237}>Pedestrian Information</Fit></SectionBar>
      <Next><Fit w={92}>Cause of Event:</Fit></Next>
    </Body>
  );
}

export default function App() {
  return (
    <Screen>
      <Global />
      <Browser />
      <Viewport>
        <Page><Frame><PageHeader /><PersonForm /></Frame></Page>
        <ScrollColumn><UpSlot><Arrow /></UpSlot><ThumbV /><DownSlot><Arrow turn={180} /></DownSlot></ScrollColumn>
      </Viewport>
      <ScrollRow><Arrow turn={-90} /><ThumbH /><Arrow turn={90} /></ScrollRow>
      <Taskbar>
        <Start><Orb /></Start>
        <Task $open $active><BigIe /></Task>
        <Task><Folder /></Task>
        <Task $mr={2}><Player /></Task>
        <Task $open><Outlook /></Task>
        <Task $open><Excel /></Task>
        <Task $open><Bolt /></Task>
        <Tray>
          <svg width="112" height="20" viewBox="0 0 112 20">
            <path d="M1 12.500h8l-4-4z" fill="#fff" stroke="#55634a" strokeWidth=".6" />
            <path d="M25.500 5.500h2v-2h4v2h2v12h-8z" fill="#fff" stroke="#46533b" /><path d="M27.500 8h4v7h-4z" fill="#fff" stroke="#46533b" /><path d="M28 8h3v3h-3z" fill="#65724f" />
            <path d="M46 7h3l5-5v15l-5-5h-3z" fill="#fff" stroke="#53614a" strokeWidth=".8" /><path d="M56 7q2 3 0 6M58 5q4 5 0 10" stroke="#fff" fill="none" strokeWidth="1.300" />
            <path d="M70 13h2v3h-2zM73 11h2v5h-2zM76 9h2v7h-2zM79 7h2v9h-2zM82 5h2.500v11H82z" fill="#fff" stroke="#53614a" strokeWidth=".4" />
            <path d="M94 3v15M95.500 4h5l1 1.500h6v6h-7l-1-1.500h-4z" fill="#fff" stroke="#fff" strokeWidth="1.500" /><circle cx="104.500" cy="13.500" r="4.500" fill="#d7333a" /><path d="M102.500 11.500l4 4m0-4l-4 4" stroke="#fff" strokeWidth="1.500" />
          </svg>
          <Clock><Fit w={50}>10:12 AM</Fit><Fit w={47}>8/4/2015</Fit></Clock>
          <ShowDesktop />
        </Tray>
      </Taskbar>
      <Dialog>
        <DialogTitle><Fit w={227}>The following fields have errors:</Fit></DialogTitle>
        <Fit w={297}>You must enter a valid Related Vehicle for</Fit>
        <Fit w={83}>this person.</Fit>
        <Ok>OK</Ok>
      </Dialog>
    </Screen>
  );
}
